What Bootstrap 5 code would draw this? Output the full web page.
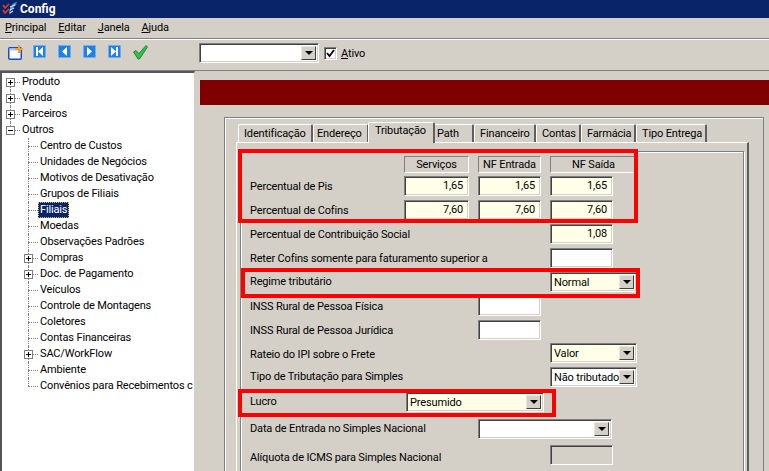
<!DOCTYPE html>
<html lang="pt-BR">
<head>
    <meta charset="UTF-8">
    <meta name="viewport" content="width=device-width, initial-scale=1.0">
    <title>Config</title>
    <link rel="stylesheet" href="https://cdn.jsdelivr.net/npm/bootstrap@5.3.0/dist/css/bootstrap.min.css">
    <style>
        html, body {
            width: 769px;
            height: 471px;
            overflow: hidden;
        }
        body {
            background: #d4d0c8;
            color: #000;
            font-family: Roboto, "Liberation Sans", Arial, sans-serif;
            font-size: 11px;
            line-height: 16px;
            letter-spacing: -0.15px;
        }
        .app-title {
            height: 18px;
            background: #0a246a;
            color: #fff;
            font-size: 12px;
            font-weight: 700;
            letter-spacing: 0;
            padding-left: 2px;
            gap: 2px;
        }
        .app-menu {
            height: 20px;
            padding-left: 5px;
            gap: 12px;
        }
        .app-toolbar {
            height: 33px;
            border-top: 1px solid #808080;
            border-bottom: 1px solid #808080;
            box-shadow: inset 0 1px 0 #fff;
            padding: 4px 0 0 8px;
        }
        .tool-btn {
            width: 25px;
            display: flex;
            margin-top: 2px;
        }
        .sunken {
            border: 1px solid;
            border-color: #808080 #fff #fff #808080;
            box-shadow: inset 1px 1px 0 #404040, inset -1px -1px 0 #d4d0c8;
        }
        .combo {
            height: 20px;
            background: #fff;
            padding: 2px 2px 2px 3px;
            overflow: hidden;
            white-space: nowrap;
        }
        .combo-yellow, .field-yellow {
            background: #ffffe8;
        }
        .combo-text {
            flex: 1;
            overflow: hidden;
        }
        .combo-btn {
            flex: 0 0 15px;
            background: #d4d0c8;
            border: 1px solid;
            border-color: #e8e6e0 #404040 #404040 #e8e6e0;
        }
        .combo-btn::after {
            content: "";
            border: 4px solid transparent;
            border-top: 4px solid #000;
            border-bottom: 0;
        }
        .top-combo {
            width: 120px;
            margin-left: 41px;
        }
        .top-check {
            width: 13px;
            height: 13px;
            margin: 4px 4px 0 5px;
            background: #fff;
        }
        .top-label {
            margin-top: 3px;
        }
        .tree-pane {
            width: 195px;
            height: 400px;
            background: #fff;
            border-top: 2px solid #555;
            border-left: 2px solid #555;
            border-right: 1px solid #d4d0c8;
            padding-top: 1px;
            overflow: hidden;
            flex: none;
        }
        .tree-item {
            position: relative;
            height: 16px;
            padding-left: 20px;
            white-space: nowrap;
        }
        .tree-sub {
            padding-left: 38px;
        }
        .tree-item::before {
            content: "";
            position: absolute;
            left: 8px;
            top: 0;
            bottom: 0;
            border-left: 1px dotted #808080;
        }
        .tree-item::after {
            content: "";
            position: absolute;
            left: 8px;
            width: 10px;
            top: 8px;
            border-top: 1px dotted #808080;
        }
        .tree-sub::before, .tree-sub::after {
            left: 26px;
        }
        .tree-first::before {
            top: 8px;
        }
        .tree-last::before {
            bottom: 8px;
        }
        .tree-box {
            position: absolute;
            z-index: 1;
            left: 4px;
            top: 4px;
            width: 9px;
            height: 9px;
            background: #fff;
            border: 1px solid #808080;
        }
        .tree-sub .tree-box {
            left: 22px;
        }
        .tree-box::before {
            content: "";
            position: absolute;
            left: 1px;
            top: 3px;
            width: 5px;
            height: 1px;
            background: #000;
        }
        .tree-plus::after {
            content: "";
            position: absolute;
            left: 3px;
            top: 1px;
            width: 1px;
            height: 5px;
            background: #000;
        }
        .tree-selected {
            display: inline-block;
            height: 16px;
            margin-left: -2px;
            padding: 0 2px;
            background: #0a246a;
            color: #fff;
            outline: 1px dotted #e8c040;
            outline-offset: -1px;
        }
        .work-pane {
            flex: 1;
            min-width: 0;
        }
        .title-bar {
            height: 25px;
            margin: 9px 0 12px 5px;
            background: #800000;
        }
        .group-box {
            height: 360px;
            margin: 0 5px 0 29px;
            padding: 4px 14px 0 11px;
            border: 1px solid #808080;
            box-shadow: inset 1px 1px 0 #fff;
        }
        .form-tabs {
            height: 20px;
            padding-left: 2px;
            border: 0;
            flex-wrap: nowrap;
            align-items: flex-start;
        }
        .form-tab {
            height: 18px;
            margin-top: 2px;
            padding: 1px 0 0 5px;
            background: #d4d0c8;
            border-top: 1px solid #fff;
            border-left: 1px solid #fff;
            border-right: 2px solid #606060;
            border-radius: 2px 2px 0 0;
            color: #000;
            white-space: nowrap;
        }
        .form-tab.is-on {
            height: 21px;
            margin: 0 -1px;
            padding-left: 6px;
            padding-top: 0;
            position: relative;
            z-index: 1;
        }
        .tab-ident { width: 75px; }
        .tab-ender { width: 56px; padding-left: 3px; }
        .tab-tribu { width: 67px; }
        .tab-path { width: 40px; padding-left: 2px; }
        .tab-finan { width: 62px; }
        .tab-conta { width: 45px; }
        .tab-farma { width: 55px; }
        .tab-entre { width: 71px; }
        .tab-body {
            height: 340px;
            padding: 8px 3px 0 3px;
            border-top: 1px solid #fff;
            border-left: 1px solid #fff;
            border-right: 2px solid #606060;
        }
        .inner-box {
            position: relative;
            height: 330px;
            border: 1px solid #808080;
            box-shadow: 1px 1px 0 #fff, inset 1px 1px 0 #fff;
            padding: 4px 0 0 9px;
        }
        .tax-grid {
            display: grid;
            grid-template-columns: 145px 65px 63px 87px;
            grid-template-rows: 16px 20px 20px 20px 20px 20px 20px 19px 20px 20px 22px 24px 20px;
            column-gap: 9px;
            row-gap: 4px;
            align-items: center;
        }
        .tax-label {
            padding-top: 2px;
        }
        .tax-label-low {
            padding-top: 4px;
        }
        .tax-label-lower {
            padding-top: 6px;
        }
        .tax-head {
            height: 17px;
            text-align: center;
            border: 1px solid;
            border-color: #808080 #fff #fff #808080;
        }
        .tax-field {
            display: block;
            height: 20px;
            width: 63px;
            padding: 1px 5px 0 0;
            text-align: right;
            background: #fff;
        }
        .tax-wide {
            width: 65px;
        }
        .tax-field.field-yellow {
            background: #ffffe8;
        }
        .field-off {
            background: #d4d0c8;
        }
        .span-two {
            grid-column: span 2;
        }
        .span-three {
            grid-column: span 3;
        }
        .combo-lucro {
            width: 138px;
            margin-left: 2px;
        }
        .combo-data {
            width: 134px;
        }
        .mark-box {
            position: absolute;
            border: 4px solid #f00;
            pointer-events: none;
        }
        .mark-pis {
            left: -3px;
            top: -3px;
            width: 400px;
            height: 74px;
        }
        .mark-regime {
            left: 0;
            top: 116px;
            width: 399px;
            height: 30px;
        }
        .mark-lucro {
            left: -3px;
            top: 237px;
            width: 318px;
            height: 28px;
        }
    </style>
</head>
<body>
    <!-- Title -->
    <div class="app-title d-flex align-items-center">
        <svg width="16" height="16" viewBox="0 0 16 16">
            <path d="M15 1 C10 2 7 6 7 14 C9 9 11 6 14 4 z" fill="#5a8cd0"/>
            <path d="M8 6 L13 4 M8 9 L12 7 M8 12 L11 10" stroke="#bfe0f4" stroke-width="1.200" fill="none"/>
            <path d="M1 4 L3 7 L7 3 M1 9 L3 12 L7 8" stroke="#e83828" stroke-width="1.600" fill="none"/>
        </svg>
        <span>Config</span>
    </div>

    <!-- Menu -->
    <div class="app-menu d-flex align-items-center">
        <span><u>P</u>rincipal</span>
        <span><u>E</u>ditar</span>
        <span><u>J</u>anela</span>
        <span><u>A</u>juda</span>
    </div>

    <!-- Toolbar -->
    <div class="app-toolbar d-flex align-items-start">
        <span class="tool-btn">
            <svg width="15" height="15" viewBox="0 0 15 15">
                <rect x="0.750" y="2.750" width="12.500" height="11.500" rx="1" fill="#fff" stroke="#1050c0" stroke-width="1.500"/>
                <rect x="1.500" y="3.500" width="11" height="2" fill="#a8ccf4"/>
                <path d="M10 0 h2 v3 h3 v2 h-3 v3 h-2 v-3 h-3 v-2 h3 z" fill="#f0a030"/>
            </svg>
        </span>
        <span class="tool-btn">
            <svg width="13" height="13" viewBox="0 0 13 13">
                <rect width="13" height="13" rx="1" fill="#6ab0f0"/>
                <rect x="1" y="1" width="11" height="11" fill="#2080e4"/>
                <path d="M3 2 h2 v9 h-2 z M10 2 v9 l-5 -4.500 z" fill="#fff"/>
            </svg>
        </span>
        <span class="tool-btn">
            <svg width="13" height="13" viewBox="0 0 13 13">
                <rect width="13" height="13" rx="1" fill="#6ab0f0"/>
                <rect x="1" y="1" width="11" height="11" fill="#2080e4"/>
                <path d="M9 2 v9 l-5 -4.500 z" fill="#fff"/>
            </svg>
        </span>
        <span class="tool-btn">
            <svg width="13" height="13" viewBox="0 0 13 13">
                <rect width="13" height="13" rx="1" fill="#6ab0f0"/>
                <rect x="1" y="1" width="11" height="11" fill="#2080e4"/>
                <path d="M4 2 v9 l5 -4.500 z" fill="#fff"/>
            </svg>
        </span>
        <span class="tool-btn">
            <svg width="13" height="13" viewBox="0 0 13 13">
                <rect width="13" height="13" rx="1" fill="#6ab0f0"/>
                <rect x="1" y="1" width="11" height="11" fill="#2080e4"/>
                <path d="M8 2 h2 v9 h-2 z M3 2 v9 l5 -4.500 z" fill="#fff"/>
            </svg>
        </span>
        <span class="tool-btn">
            <svg width="15" height="15" viewBox="0 0 15 15">
                <path d="M0.500 7 L3 5.500 L6 8.500 L13 0.500 L14.500 2 L6.500 14 L5 14 z" fill="#30c048" stroke="#107828" stroke-width="0.800"/>
            </svg>
        </span>
        <div class="top-combo combo sunken d-flex">
            <span class="combo-text"></span>
            <span class="combo-btn d-flex align-items-center justify-content-center"></span>
        </div>
        <span class="top-check sunken d-flex align-items-center justify-content-center">
            <svg width="9" height="9" viewBox="0 0 9 9"><path d="M1 4 L3.500 7 L8 1" stroke="#000" stroke-width="1.800" fill="none"/></svg>
        </span>
        <span class="top-label"><u>A</u>tivo</span>
    </div>

    <div class="d-flex">
        <!-- Tree -->
        <div class="tree-pane">
            <div class="tree-item tree-first"><span class="tree-box tree-plus"></span>Produto</div>
            <div class="tree-item"><span class="tree-box tree-plus"></span>Venda</div>
            <div class="tree-item"><span class="tree-box tree-plus"></span>Parceiros</div>
            <div class="tree-item tree-last"><span class="tree-box"></span>Outros</div>
            <div class="tree-item tree-sub">Centro de Custos</div>
            <div class="tree-item tree-sub">Unidades de Negócios</div>
            <div class="tree-item tree-sub">Motivos de Desativação</div>
            <div class="tree-item tree-sub">Grupos de Filiais</div>
            <div class="tree-item tree-sub"><span class="tree-selected">Filiais</span></div>
            <div class="tree-item tree-sub">Moedas</div>
            <div class="tree-item tree-sub">Observações Padrões</div>
            <div class="tree-item tree-sub"><span class="tree-box tree-plus"></span>Compras</div>
            <div class="tree-item tree-sub"><span class="tree-box tree-plus"></span>Doc. de Pagamento</div>
            <div class="tree-item tree-sub">Veículos</div>
            <div class="tree-item tree-sub">Controle de Montagens</div>
            <div class="tree-item tree-sub">Coletores</div>
            <div class="tree-item tree-sub">Contas Financeiras</div>
            <div class="tree-item tree-sub"><span class="tree-box tree-plus"></span>SAC/WorkFlow</div>
            <div class="tree-item tree-sub">Ambiente</div>
            <div class="tree-item tree-sub tree-last">Convênios para Recebimentos c</div>
        </div>

        <!-- Form area -->
        <div class="work-pane">
            <div class="title-bar"></div>
            <div class="group-box">
                <ul class="nav form-tabs">
                    <li class="form-tab tab-ident">Identificação</li>
                    <li class="form-tab tab-ender">Endereço</li>
                    <li class="form-tab is-on tab-tribu">Tributação</li>
                    <li class="form-tab tab-path">Path</li>
                    <li class="form-tab tab-finan">Financeiro</li>
                    <li class="form-tab tab-conta">Contas</li>
                    <li class="form-tab tab-farma">Farmácia</li>
                    <li class="form-tab tab-entre">Tipo Entrega</li>
                </ul>
                <div class="tab-body">
                    <div class="inner-box">
                        <div class="tax-grid">
                            <span></span>
                            <span class="tax-head">Serviços</span>
                            <span class="tax-head">NF Entrada</span>
                            <span class="tax-head">NF Saída</span>

                            <span class="tax-label">Percentual de Pis</span>
                            <span class="tax-field tax-wide field-yellow sunken">1,65</span>
                            <span class="tax-field field-yellow sunken">1,65</span>
                            <span class="tax-field field-yellow sunken">1,65</span>

                            <span class="tax-label">Percentual de Cofins</span>
                            <span class="tax-field tax-wide field-yellow sunken">7,60</span>
                            <span class="tax-field field-yellow sunken">7,60</span>
                            <span class="tax-field field-yellow sunken">7,60</span>

                            <span class="span-three tax-label">Percentual de Contribuição Social</span>
                            <span class="tax-field field-yellow sunken">1,08</span>

                            <span class="span-three tax-label">Reter Cofins somente para faturamento superior a</span>
                            <span class="tax-field sunken"></span>

                            <span class="span-three">Regime tributário</span>
                            <div class="combo combo-yellow sunken d-flex">
                                <span class="combo-text">Normal</span>
                                <span class="combo-btn d-flex align-items-center justify-content-center"></span>
                            </div>

                            <span class="span-two tax-label">INSS Rural de Pessoa Física</span>
                            <span class="tax-field sunken"></span>
                            <span></span>

                            <span class="span-two tax-label">INSS Rural de Pessoa Jurídica</span>
                            <span class="tax-field sunken"></span>
                            <span></span>

                            <span class="span-three tax-label-low">Rateio do IPI sobre o Frete</span>
                            <div class="combo combo-yellow sunken d-flex">
                                <span class="combo-text">Valor</span>
                                <span class="combo-btn d-flex align-items-center justify-content-center"></span>
                            </div>

                            <span class="span-three">Tipo de Tributação para Simples</span>
                            <div class="combo sunken d-flex">
                                <span class="combo-text">Não tributado</span>
                                <span class="combo-btn d-flex align-items-center justify-content-center"></span>
                            </div>

                            <span>Lucro</span>
                            <div class="combo combo-lucro combo-yellow sunken d-flex span-two">
                                <span class="combo-text">Presumido</span>
                                <span class="combo-btn d-flex align-items-center justify-content-center"></span>
                            </div>
                            <span></span>

                            <span class="span-two">Data de Entrada no Simples Nacional</span>
                            <div class="combo combo-data sunken d-flex span-two">
                                <span class="combo-text"></span>
                                <span class="combo-btn d-flex align-items-center justify-content-center"></span>
                            </div>

                            <span class="span-three tax-label-lower">Alíquota de ICMS para Simples Nacional</span>
                            <span class="tax-field field-off sunken"></span>
                        </div>

                        <!-- Highlight boxes drawn over the form -->
                        <div class="mark-box mark-pis"></div>
                        <div class="mark-box mark-regime"></div>
                        <div class="mark-box mark-lucro"></div>
                    </div>
                </div>
            </div>
        </div>
    </div>

    <script src="https://cdn.jsdelivr.net/npm/bootstrap@5.3.0/dist/js/bootstrap.bundle.min.js"></script>
</body>
</html>
